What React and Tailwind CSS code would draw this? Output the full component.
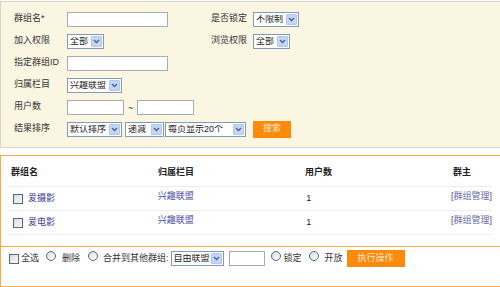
import React from "react";

const font = "font-['Liberation_Sans','Noto_Sans_CJK_SC',sans-serif]";

function Select({ className, label }) {
  return (
    <div
      className={`flex items-center h-[15px] border border-[#7f9db9] bg-white shrink-0 ${className}`}
    >
      <span className="flex-1 pl-[2px] text-[9px] leading-none text-[#222] whitespace-nowrap overflow-hidden">
        {label}
      </span>
      <span className="flex items-center justify-center w-[11px] h-[11px] mr-[1px] bg-[#c5d5f8] border border-[#b1c6f2] rounded-[1px] shrink-0">
        <svg width="7" height="5" viewBox="0 0 7 5">
          <path d="M1 1 L3.5 3.5 L6 1" stroke="#4d6185" strokeWidth="1.4" fill="none" />
        </svg>
      </span>
    </div>
  );
}

function Input({ className }) {
  return (
    <div className={`h-[15px] border border-[#a5acb5] bg-white shrink-0 ${className}`} />
  );
}

function Checkbox() {
  return (
    <span className="inline-block w-[10px] h-[10px] border border-[#4e6a8f] bg-gradient-to-br from-[#dcdcd6] to-[#fafaf8] shrink-0" />
  );
}

function Radio() {
  return (
    <span className="inline-block w-[10px] h-[10px] rounded-full border border-[#4e6a8f] bg-gradient-to-br from-[#dcdcd6] to-white shrink-0" />
  );
}

function Row({ label, children }) {
  return (
    <div className="flex items-center h-[22px]">
      <span className="w-[53px] shrink-0 text-[9px] text-[#333]">{label}</span>
      {children}
    </div>
  );
}

const groups = [
  { name: "爱摄影", cat: "兴趣联盟", users: 1 },
  { name: "爱电影", cat: "兴趣联盟", users: 1 },
];

export default function App() {
  return (
    <div className={`w-[500px] h-[287px] bg-white overflow-hidden ${font}`}>
      <div className="mt-[1px] h-[147px] bg-[#faf6e2] border-t border-b border-l border-[#d8d6cc] pl-[13px] pt-[6px]">
        <div className="flex">
          <div className="w-[197px]">
            <Row label="群组名*">
              <Input className="w-[101px]" />
            </Row>
            <Row label="加入权限">
              <Select className="w-[37px]" label="全部" />
            </Row>
          </div>
          <div>
            <div className="flex items-center h-[22px]">
              <span className="w-[42px] text-[9px] text-[#333]">是否锁定</span>
              <Select className="w-[46px]" label="不限制" />
            </div>
            <div className="flex items-center h-[22px]">
              <span className="w-[42px] text-[9px] text-[#333]">浏览权限</span>
              <Select className="w-[37px]" label="全部" />
            </div>
          </div>
        </div>
        <Row label="指定群组ID">
          <Input className="w-[101px]" />
        </Row>
        <Row label="归属栏目">
          <Select className="w-[55px]" label="兴趣联盟" />
        </Row>
        <Row label="用户数">
          <Input className="w-[57px]" />
          <span className="w-[13px] text-center text-[9px] text-[#333] pt-[3px]">~</span>
          <Input className="w-[57px]" />
        </Row>
        <Row label="结果排序">
          <Select className="w-[55px]" label="默认排序" />
          <Select className="w-[39px] ml-[3px]" label="递减" />
          <Select className="w-[81px] ml-[1px]" label="每页显示20个" />
          <button className="ml-[7px] w-[38px] h-[17px] bg-[#fb8a0d] text-[9px] text-[#fde7c9]">
            搜索
          </button>
        </Row>
      </div>

      <div className="mt-[7px] h-[132px] border-t border-b border-l border-[#f7aa4d]">
        <div className="h-[89px] pl-[8px] pr-[8px]">
          <div className="flex h-[31px] items-end pb-[7px] border-b border-[#ececec] text-[9px] font-bold text-[#222]">
            <span className="w-[149px] pl-[2px]">群组名</span>
            <span className="w-[147px]">归属栏目</span>
            <span className="w-[148px]">用户数</span>
            <span>群主</span>
          </div>
          {groups.map((g) => (
            <div
              key={g.name}
              className="flex h-[24px] items-center border-b border-[#ececec] text-[9px] whitespace-nowrap"
            >
              <span className="w-[149px] flex items-center pl-[4px]">
                <Checkbox />
                <span className="ml-[5px] text-[#3c3c94]">{g.name}</span>
              </span>
              <span className="w-[147px] text-[#4848a0] -mt-[3px]">{g.cat}</span>
              <span className="w-[147px] pl-[2px] text-[#222]">{g.users}</span>
              <span className="text-[#6a6aa8] -mt-[3px]">
                <span className="text-[#555]">[</span>群组管理<span className="text-[#555]">]</span>
              </span>
            </div>
          ))}
        </div>
        <div className="flex items-center h-[24px] pl-[8px] mt-[1px] border-t border-[#f7aa4d] text-[9px] text-[#333] whitespace-nowrap">
          <Checkbox />
          <span className="ml-[2px]">全选</span>
          <span className="ml-[7px]"><Radio /></span>
          <span className="ml-[6px]">删除</span>
          <span className="ml-[8px]"><Radio /></span>
          <span className="ml-[5px]">合并到其他群组:</span>
          <Select className="w-[53px] ml-[2px]" label="自由联盟" />
          <Input className="w-[36px] ml-[5px]" />
          <span className="ml-[6px]"><Radio /></span>
          <span className="ml-[3px]">锁定</span>
          <span className="ml-[7px]"><Radio /></span>
          <span className="ml-[6px]">开放</span>
          <button className="ml-[4px] w-[58px] h-[17px] bg-[#fb8a0d] text-[9px] text-[#fde7c9]">
            执行操作
          </button>
        </div>
      </div>
    </div>
  );
}
